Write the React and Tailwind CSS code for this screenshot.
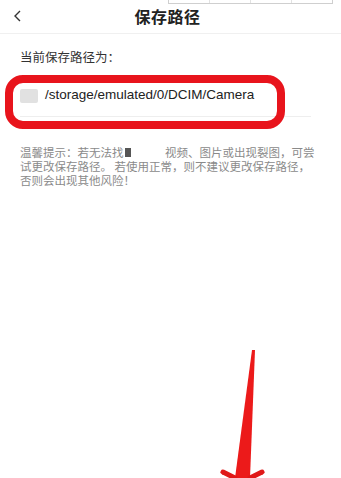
export default function App() {
  return (
    <div
      className="relative w-[341px] h-[478px] overflow-hidden bg-white text-[#333]"
      style={{ fontFamily: '"Noto Sans CJK SC", "Liberation Sans", sans-serif' }}
    >
      {/* fragment of a table at the top edge */}
      <div className="absolute left-[168px] top-[-8px] w-[165px] h-[12px] border border-[#cfcfcf] flex">
        <div className="flex-1 border-r border-[#e2e2e2]"></div>
        <div className="flex-1 border-r border-[#e2e2e2]"></div>
        <div className="flex-1 border-r border-[#e2e2e2]"></div>
        <div className="flex-1"></div>
      </div>

      <header className="relative h-[34px] flex items-center justify-center border-b border-[#f0f0f0]">
        <svg className="absolute left-[12px] top-[9px]" width="12" height="14" viewBox="0 0 12 14">
          <path d="M8 2 L3 7 L8 12" fill="none" stroke="#333" strokeWidth="1.4" />
        </svg>
        <h1 className="text-[16px] font-bold text-[#222] tracking-[0.5px] -mt-[2px] -ml-[6px]">保存路径</h1>
      </header>

      <div className="pl-[20px] pt-[14px] h-[32px] text-[12.5px] leading-[18px] text-[#333]">当前保存路径为：</div>

      <div className="relative mt-[13px] ml-[20px] mr-[30px] h-[38px] flex items-center gap-[7px] border-b border-[#eeeeee]">
        <div className="w-[18px] h-[14px] rounded-[2px] bg-[#e1e1e1] -mt-[4px]"></div>
        <span className="text-[13.5px] text-[#222] -mt-[4px]" style={{ fontFamily: '"Liberation Sans", sans-serif' }}>
          /storage/emulated/0/DCIM/Camera
        </span>
        {/* red annotation frame */}
        <div className="absolute left-[-15px] top-[-4px] w-[280px] h-[54px] rounded-[18px] border-[8px] border-[#e8141c]"></div>
      </div>

      <p className="pl-[20px] pt-[28px] text-[11.5px] leading-[14px] text-[#8a8a8a]">
        温馨提示：若无法找
        <span className="relative inline-block mr-[30px]">
          到
          <span className="absolute left-0 top-[1px] w-[12px] h-[13px] bg-white"></span>
          <span className="absolute left-[1px] top-[3px] w-[6px] h-[9px] bg-[#555]"></span>
        </span>
        视频、图片或出现裂图，可尝
        <br />
        试更改保存路径。 若使用正常，则不建议更改保存路径，
        <br />
        否则会出现其他风险！
      </p>

      {/* red arrow annotation */}
      <svg className="absolute left-[215px] top-[345px]" width="60" height="133" viewBox="0 0 60 133">
        <path d="M37 5 L40 5 L35 133 L20 133 Z" fill="#ec1a1a" />
        <path d="M8 127 L20 133" stroke="#e01818" strokeWidth="5" strokeLinecap="round" />
        <path d="M47 127 L35 133" stroke="#e01818" strokeWidth="5" strokeLinecap="round" />
      </svg>
    </div>
  );
}
